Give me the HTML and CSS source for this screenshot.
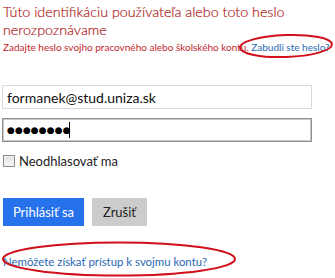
FILE: index.html
```html
<!DOCTYPE html>
<html lang="sk">
<head>
<meta charset="utf-8">
<link rel="stylesheet" href="styles.css">
</head>
<body>
<div class="page">
  <div class="error">
    <div class="error-title">Túto identifikáciu používateľa alebo toto heslo nerozpoznávame</div>
    <div class="error-sub">Zadajte heslo svojho pracovného alebo školského kontu. <a class="link" href="#">Zabudli ste heslo?</a></div>
  </div>
  <div class="fields">
    <input class="field field-email" type="text" value="formanek@stud.uniza.sk">
    <div class="field-wrap">
      <input class="field field-pass" type="text" value="●●●●●●●●">
      <span class="caret"></span>
    </div>
  </div>
  <label class="keep"><span class="checkbox"></span><span class="keep-text">Neodhlasovať ma</span></label>
  <div class="buttons">
    <button class="btn btn-primary">Prihlásiť sa</button>
    <button class="btn btn-secondary">Zrušiť</button>
  </div>
  <a class="link link-bottom" href="#">Nemôžete získať prístup k svojmu kontu?</a>
</div>
<svg class="mark mark-top" width="100" height="30" viewBox="0 0 100 30"><ellipse cx="50" cy="15" rx="46" ry="11" fill="none" stroke="#d0101a" stroke-width="2" transform="rotate(-2 50 15)"/></svg>
<svg class="mark mark-bottom" width="240" height="40" viewBox="0 0 240 40"><ellipse cx="119" cy="20" rx="116" ry="16.5" fill="none" stroke="#d0101a" stroke-width="2"/></svg>
</body>
</html>
```
FILE: styles.css
```css
html, body {
  margin: 0;
  padding: 0;
  background: #fff;
  width: 335px;
  height: 278px;
  overflow: hidden;
}
body {
  position: relative;
  font-family: Lato, "Open Sans", sans-serif;
}
.page {
  padding: 2px 0 0 3px;
}
.error-title {
  color: #b01f25;
  font-size: 14.3px;
  font-weight: 300;
  line-height: 18px;
  padding-top: 1px;
  -webkit-text-stroke: 0.2px #b01f25;
}
.error-sub {
  color: #c1272d;
  font-size: 10px;
  line-height: 14px;
  margin-top: 1px;
  white-space: nowrap;
}
.link {
  color: #2b67b4;
  text-decoration: none;
}
.fields {
  margin-top: 31px;
  display: flex;
  flex-direction: column;
  gap: 9px;
  margin-left: -1px;
}
.field {
  box-sizing: border-box;
  width: 310px;
  height: 24px;
  margin: 0;
  padding: 0 4px;
  font-family: Lato, sans-serif;
  font-size: 14px;
  color: #111;
  background: #fff;
  outline: none;
  display: block;
}
.field-email {
  border: 1px solid #d9d9d9;
}
.field-wrap {
  position: relative;
}
.field-pass {
  border: 1px solid #8f8f8f;
  box-shadow: inset 0 0 0 1px #c8c8c8;
  height: 24px;
  font-family: "DejaVu Sans", sans-serif;
  font-size: 9px;
  letter-spacing: 0.1px;
  color: #000;
}
.caret {
  position: absolute;
  left: 67px;
  top: 4px;
  width: 1px;
  height: 16px;
  background: #000;
}
.keep {
  display: flex;
  align-items: center;
  gap: 4px;
  margin-top: 12px;
  height: 14px;
}
.checkbox {
  box-sizing: border-box;
  width: 12px;
  height: 12px;
  border: 1px solid #8e8e8e;
  background: linear-gradient(#e0e0e0, #f7f7f7);
  box-shadow: inset 0 0 0 1px #f0f0f0;
}
.keep-text {
  font-size: 13px;
  color: #222;
}
.buttons {
  display: flex;
  gap: 8px;
  margin-top: 30px;
}
.btn {
  border: none;
  margin: 0;
  height: 28px;
  font-family: Lato, sans-serif;
  font-size: 13px;
  padding: 0;
}
.btn-primary {
  width: 81px;
  background: #2672ec;
  color: #fff;
}
.btn-secondary {
  width: 55px;
  background: #cccccc;
  color: #222;
}
.link-bottom {
  display: inline-block;
  margin-top: 29px;
  font-size: 11.4px;
}
.mark {
  position: absolute;
}
.mark-top {
  left: 236px;
  top: 31px;
}
.mark-bottom {
  left: 0;
  top: 239px;
}
```
